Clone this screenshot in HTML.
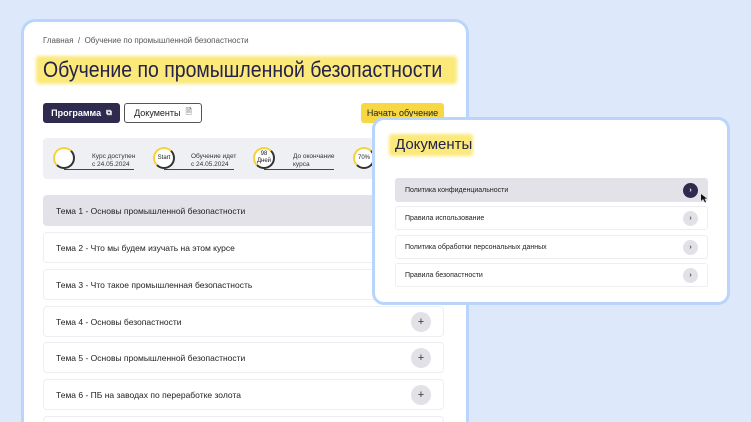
<!DOCTYPE html>
<html style="overflow:hidden;width:751px;height:422px"><head><meta charset="utf-8"><style>
*{box-sizing:border-box;margin:0;padding:0}
body{width:751px;height:422px;overflow:hidden;background:#dde9fb;font-family:"Liberation Sans",sans-serif;position:relative;color:#222}
.card{position:absolute;left:21px;top:19px;width:448px;height:403px;background:#fff;border:3px solid #b9d5fb;border-bottom:none;border-radius:14px 14px 0 0}
.abs{position:absolute}
.bc{left:43px;top:36px;font-size:8px;color:#555}
.hl{background:#fbe97a;filter:blur(1.5px);border-radius:3px}
.title{left:43px;top:57px;font-size:22px;color:#24224a;transform:scaleX(0.885);transform-origin:0 0;white-space:nowrap}
.btn{height:20px;border-radius:3px;font-size:9px;display:flex;align-items:center;justify-content:center}
.stats{left:43px;top:138px;width:401px;height:41px;background:#eff0f4;border-radius:4px}
.ring{width:22px;height:22px;border-radius:50%;border:2px solid #f3d23c;border-right-color:#333;border-bottom-color:#333;font-size:6px;display:flex;align-items:center;justify-content:center;text-align:center;line-height:7px;background:#fff}
.st{font-size:6.5px;line-height:8px;color:#333}
.line{height:1px;background:#444}
.row{left:43px;width:401px;height:31px;border:1px solid #eceef2;border-radius:4px;font-size:8.5px;display:flex;align-items:center;padding-left:12px;background:#fff}
.plus{position:absolute;right:12px;top:5px;width:20px;height:20px;border-radius:50%;background:#e2e1e7;font-size:11px;display:flex;align-items:center;justify-content:center;color:#333}
.pop{left:372px;top:117px;width:358px;height:188px;background:#fff;border:3px solid #b9d5fb;border-radius:12px}
.it{left:395px;width:313px;height:24px;border:1px solid #eceef2;border-radius:3px;font-size:7px;display:flex;align-items:center;padding-left:9px;background:#fff}
.arr{position:absolute;right:9px;top:4px;width:15px;height:15px;border-radius:50%;background:#e2e1e7;font-size:7px;display:flex;align-items:center;justify-content:center;font-weight:bold;color:#444}
</style></head><body>
<div class="card"></div>
<div class="abs bc">Главная &nbsp;/ &nbsp;Обучение по промышленной безопастности</div>
<div class="abs hl" style="left:36px;top:56px;width:421px;height:28px"></div>
<div class="abs title">Обучение по промышленной безопастности</div>
<div class="abs btn" style="left:43px;top:103px;width:77px;background:#2e2b4f;color:#fff;font-weight:bold">Программа &nbsp;<span style="font-size:8px">⧉</span></div>
<div class="abs btn" style="left:124px;top:103px;width:78px;border:1px solid #555;color:#222">Документы &nbsp;<span style="font-size:8px">🗎</span></div>
<div class="abs btn" style="left:361px;top:103px;width:83px;background:#f7d842;color:#222">Начать обучение</div>
<div class="abs stats"></div>
<div class="abs ring" style="left:53px;top:147px"></div>
<div class="abs line" style="left:64px;top:169px;width:70px"></div>
<div class="abs st" style="left:92px;top:153px">Курс доступен<br>с 24.05.2024</div>
<div class="abs ring" style="left:153px;top:147px">Start</div>
<div class="abs line" style="left:164px;top:169px;width:70px"></div>
<div class="abs st" style="left:191px;top:153px">Обучение идет<br>с 24.05.2024</div>
<div class="abs ring" style="left:253px;top:147px">98<br>Дней</div>
<div class="abs line" style="left:264px;top:169px;width:70px"></div>
<div class="abs st" style="left:293px;top:153px">До окончание<br>курса</div>
<div class="abs ring" style="left:353px;top:147px">70%</div>
<div class="abs row" style="top:195px;background:#e3e2e8;border-color:#e3e2e8">Тема 1 - Основы промышленной безопастности</div>
<div class="abs row" style="top:232px">Тема 2 - Что мы будем изучать на этом курсе</div>
<div class="abs row" style="top:269px">Тема 3 - Что такое промышленная безопастность</div>
<div class="abs row" style="top:306px">Тема 4 - Основы безопастности<div class="plus">+</div></div>
<div class="abs row" style="top:342px">Тема 5 - Основы промышленной безопастности<div class="plus">+</div></div>
<div class="abs row" style="top:379px">Тема 6 - ПБ на заводах по переработке золота<div class="plus">+</div></div>
<div class="abs row" style="top:416px;height:6px;border-bottom:none;border-radius:4px 4px 0 0"></div>
<div class="abs pop"></div>
<div class="abs hl" style="left:389px;top:134px;width:84px;height:22px"></div>
<div class="abs" style="left:395px;top:136px;font-size:15px;color:#24224a">Документы</div>
<div class="abs it" style="top:178px;background:#e3e2e8;border-color:#e3e2e8">Политика конфиденциальности<div class="arr" style="background:#2e2b4f;color:#fff">›</div></div>
<div class="abs it" style="top:206px">Правила использование<div class="arr">›</div></div>
<div class="abs it" style="top:235px">Политика обработки персональных данных<div class="arr">›</div></div>
<div class="abs it" style="top:263px">Правила безопастности<div class="arr">›</div></div>
<svg class="abs" style="left:701px;top:194px" width="7" height="9"><path d="M0 0L0 7L2 5L4 8.5L5 8L3.5 4.8L6 4.6Z" fill="#111"/></svg>
</body></html>
